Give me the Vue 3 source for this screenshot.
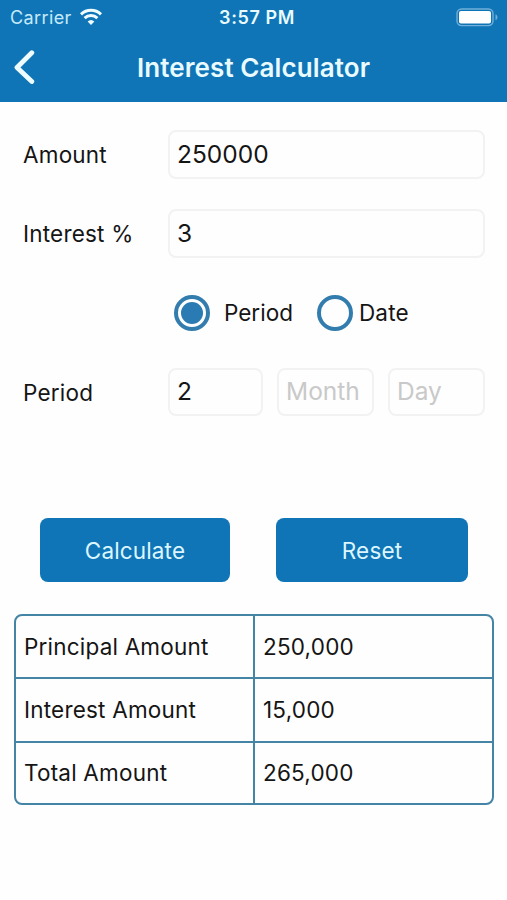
<script setup>
import { ref, reactive } from 'vue'

const form = reactive({
  amount: '250000',
  rate: '3',
  year: '2',
  month: '',
  day: '',
})

const mode = ref('period')   // period | date
const modes = [
  { id: 'period', label: 'Period' },
  { id: 'date',   label: 'Date' },
]

const results = ref([])

function calculate() {
  const principal = Number(form.amount) || 0
  const years = Number(form.year) + Number(form.month) / 12 + Number(form.day) / 365
  const interest = principal * (Number(form.rate) / 100) * years
  results.value = [
    { label: 'Principal Amount', value: principal },
    { label: 'Interest Amount',  value: interest },
    { label: 'Total Amount',     value: principal + interest },
  ]
}

function reset() {
  Object.keys(form).forEach(key => { form[key] = '' })
  calculate()
}

const format = n => Math.round(n).toLocaleString('en-US')

calculate()
</script>

<template>
  <div class="screen">
    <header class="header">
      <div class="status">
        <div class="status-left">
          <span class="carrier">Carrier</span>
          <svg class="wifi" width="24" height="18" viewBox="0 0 24 18">
            <path d="M2 6.4a14.4 14.4 0 0 1 20 0" />
            <path d="M5.6 10.2a9.2 9.2 0 0 1 12.8 0" />
            <path class="wifi-dot" d="M12 17l-3.4-3.5a5 5 0 0 1 6.8 0z" />
          </svg>
        </div>
        <span class="clock">3:57 PM</span>
        <div class="status-right">
          <svg width="43" height="19" viewBox="0 0 43 19">
            <rect class="battery-case" x="1" y="1" width="36" height="16.6" rx="4.5" />
            <rect class="battery-fill" x="3" y="3" width="32" height="12.6" rx="2" />
            <path class="battery-tip" d="M39.5 6.3c2.6 1.2 2.6 4.8 0 6z" />
          </svg>
        </div>
      </div>
      <div class="nav">
        <button class="back" aria-label="Back">
          <svg width="22" height="36" viewBox="0 0 22 36">
            <path d="M18.8 3.8L4 18.5L18.8 32.5" />
          </svg>
        </button>
        <h1 class="title">Interest Calculator</h1>
      </div>
    </header>

    <main class="content">
      <div class="row">
        <label class="label">Amount</label>
        <input v-model="form.amount" class="field">
      </div>
      <div class="row">
        <label class="label">Interest %</label>
        <input v-model="form.rate" class="field">
      </div>
      <div class="modes">
        <button
          v-for="m in modes"
          :key="m.id"
          :class="['mode', `mode--${m.id}`]"
          @click="mode = m.id"
        >
          <span class="radio"><span v-if="mode === m.id" class="radio-dot"></span></span>
          <span class="mode-label">{{ m.label }}</span>
        </button>
      </div>
      <div class="row row--parts">
        <label class="label">Period</label>
        <div class="parts">
          <input v-model="form.year" class="field" placeholder="Year">
          <input v-model="form.month" class="field" placeholder="Month">
          <input v-model="form.day" class="field" placeholder="Day">
        </div>
      </div>

      <div class="actions">
        <button class="btn" @click="calculate">Calculate</button>
        <button class="btn" @click="reset">Reset</button>
      </div>

      <div class="results">
        <div v-for="r in results" :key="r.label" class="result">
          <span class="cell">{{ r.label }}</span>
          <span class="cell">{{ format(r.value) }}</span>
        </div>
      </div>
    </main>
  </div>
</template>

<style>
body {
  margin: 0;
  background: #fefefe;
}
</style>

<style scoped>
.screen {
  height: 900px;
  overflow: hidden;
  background: #fefefe;
  color: #151515;
  font-family: Inter, "Liberation Sans", sans-serif;
  font-size: 22.5px;
}

.screen * { box-sizing: border-box; }

button {
  padding: 0;
  border: 0;
  background: none;
  color: inherit;
  font: inherit;
  cursor: pointer;
}

/* header */
.header {
  height: 102px;
  background: #0f75b6;
  color: #e9fbff;
}

.status {
  display: grid;
  grid-template-columns: 1fr auto 1fr;
  align-items: center;
  height: 34px;
  padding: 0 8px 0 10px;
}

.status-left {
  display: flex;
  align-items: center;
  gap: 7px;
}

.carrier {
  color: #c5eafa;
  font-size: 18px;
  letter-spacing: 0.4px;
}

.wifi {
  fill: none;
  stroke: #effcff;
  stroke-width: 3;
}

.wifi-dot {
  fill: #effcff;
  stroke: none;
}

.clock {
  padding-left: 5px;
  font-size: 18px;
  font-weight: 600;
  letter-spacing: 0.6px;
}

.status-right {
  display: flex;
  justify-content: flex-end;
}

.battery-case {
  fill: none;
  stroke: #70b0da;
  stroke-width: 1.4;
}

.battery-fill { fill: #fff; }
.battery-tip { fill: #70b0da; }

.nav {
  display: grid;
  grid-template-columns: 60px 1fr 60px;
  align-items: center;
  height: 66px;
}

.back {
  display: flex;
  padding-left: 13px;
}

.back path {
  fill: none;
  stroke: #effcff;
  stroke-width: 4.8;
  stroke-linecap: round;
  stroke-linejoin: round;
}

.title {
  margin: 0;
  text-align: center;
  font-size: 26px;
  font-weight: 600;
  letter-spacing: 0.1px;
}

/* form */
.content { padding: 28px 13px 0 14px; }

.row {
  display: grid;
  grid-template-columns: 145px 1fr;
  align-items: center;
  height: 49px;
  margin: 0 9px 30px;
}

.row--parts {
  height: 48px;
  margin-top: 31px;
}

.label { letter-spacing: 0.2px; }

.field {
  width: 100%;
  min-width: 0;
  height: 49px;
  padding: 0 7px 2px;
  border: 2px solid #f2f2f2;
  border-radius: 8px;
  outline: 0;
  background: transparent;
  color: #151515;
  font: inherit;
  font-size: 24.5px;
}

.field::placeholder {
  color: #c9c9c9;
  opacity: 1;
}

.modes {
  display: flex;
  align-items: center;
  gap: 24px;
  height: 49px;
  margin: 0 0 30px 160px;
}

.mode {
  display: flex;
  align-items: center;
  gap: 6px;
}

.mode--period { gap: 14px; }
.mode--date { letter-spacing: 0.2px; }

.radio {
  display: grid;
  place-items: center;
  width: 36px;
  height: 36px;
  border: 4px solid #327cae;
  border-radius: 50%;
}

.radio-dot {
  width: 22px;
  height: 22px;
  border-radius: 50%;
  background: #2a7bb3;
}

.parts {
  display: grid;
  grid-template-columns: 95px 97px 97px;
  gap: 14px;
}

.parts .field { height: 48px; }

/* actions */
.actions {
  display: grid;
  grid-template-columns: 190px 192px;
  gap: 46px;
  margin: 102px 0 32px 26px;
}

.btn {
  height: 64px;
  border-radius: 8px;
  background: #0f75b6;
  color: #dcf6ff;
  letter-spacing: 0.15px;
}

/* results */
.results {
  display: grid;
  grid-template-rows: 61px 64px 62px;
  height: 191px;
  overflow: hidden;
  border: 2px solid #4484a5;
  border-radius: 8px;
}

.result {
  display: grid;
  grid-template-columns: 237px 1fr;
}

.result + .result { border-top: 2px solid #4484a5; }

.cell {
  display: flex;
  align-items: center;
  padding: 0 0 1px 8px;
  letter-spacing: 0.2px;
}

.cell + .cell { border-left: 2px solid #4484a5; }
</style>
